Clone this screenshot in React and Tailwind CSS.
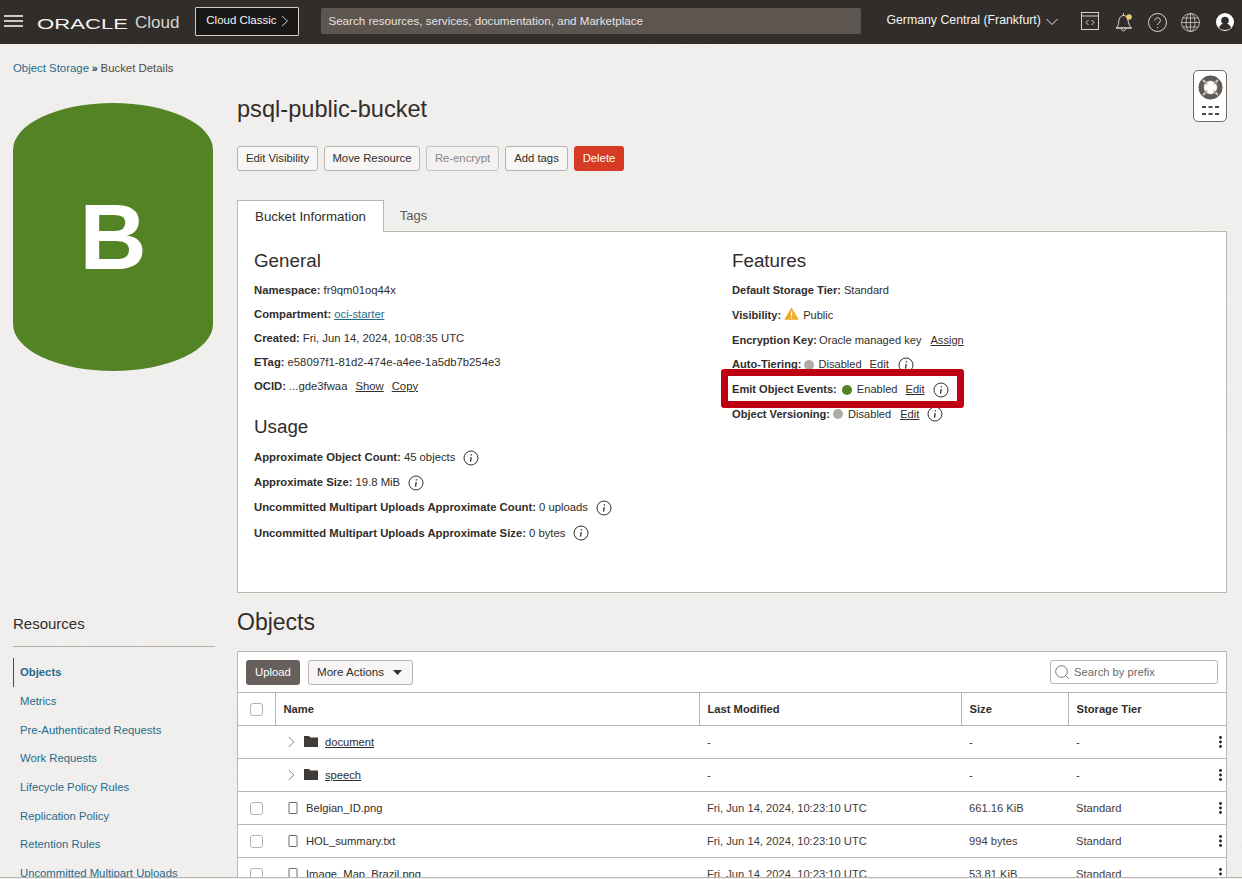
import React from 'react';

const resources = [
  'Metrics',
  'Pre-Authenticated Requests',
  'Work Requests',
  'Lifecycle Policy Rules',
  'Replication Policy',
  'Retention Rules',
  'Uncommitted Multipart Uploads',
];

const rows = [
  { folder: true, name: 'document', modified: '-', size: '-', tier: '-' },
  { folder: true, name: 'speech', modified: '-', size: '-', tier: '-' },
  { name: 'Belgian_ID.png', modified: 'Fri, Jun 14, 2024, 10:23:10 UTC', size: '661.16 KiB', tier: 'Standard' },
  { name: 'HOL_summary.txt', modified: 'Fri, Jun 14, 2024, 10:23:10 UTC', size: '994 bytes', tier: 'Standard' },
  { name: 'Image_Map_Brazil.png', modified: 'Fri, Jun 14, 2024, 10:23:10 UTC', size: '53.81 KiB', tier: 'Standard' },
];

// faint swirl pattern of the page background: [cx, cy, rings]
const swirls = [
  [120, 720, 14],
  [700, 90, 12],
  [1240, 330, 12],
  [110, 60, 8],
  [1160, 820, 10],
  [20, 420, 10],
];

function Swirls() {
  return (
    <svg width="1242" height="879" className="absolute inset-0" fill="none" stroke="#eeecea" strokeWidth="1">
      {swirls.map(([cx, cy, n]) =>
        Array.from({ length: n }, (_, i) => (
          <ellipse key={`${cx}-${i}`} cx={cx} cy={cy} rx={14 + i * 9} ry={11 + i * 8} transform={`rotate(${i * 3} ${cx} ${cy})`} />
        ))
      )}
    </svg>
  );
}

function InfoIcon({ className = '' }) {
  return (
    <svg width="16" height="16" viewBox="0 0 16 16" fill="none" className={className}>
      <circle cx="8" cy="8" r="7" stroke="#312d2a" strokeWidth="1" />
      <path d="M8.400 4.300v1.100M8.200 7.200 7.500 11.600" stroke="#312d2a" strokeWidth="1.300" />
    </svg>
  );
}

function Dot({ color }) {
  return <span className={`inline-block w-[10px] h-[10px] rounded-full ${color}`} />;
}

function Row({ label, h = 'h-[24px]', size = 'text-[11.3px]', children }) {
  return (
    <div className={`flex items-center ${h} ${size} whitespace-nowrap`}>
      <span className="font-bold">{label}</span>
      {children}
    </div>
  );
}

function FeatureRow({ label, children }) {
  return <Row label={label} h="h-[24.800px]" size="text-[11.100px]">{children}</Row>;
}

function Check() {
  return <span className="w-[13px] h-[13px] rounded-[3px] border border-[#b5b0ac] bg-white" />;
}

function Button({ className = '', children }) {
  return (
    <button className={`h-[25px] rounded-[3px] border text-[11.3px] ${className}`}>
      {children}
    </button>
  );
}

function TopBar() {
  return (
    <header className="h-[44px] bg-[#312d2a] flex items-center text-[#f5f4f2]">
      <svg width="20" height="14" viewBox="0 0 20 14" className="ml-[4px] mb-[2px]" stroke="#fff" strokeWidth="1.600">
        <path d="M0 2h19M0 7h19M0 12h19" />
      </svg>
      <div className="ml-[13px] mt-[2px] w-[91px] text-[15px] leading-none origin-left scale-x-[1.475] whitespace-nowrap">
        ORACLE
      </div>
      <span className="ml-[7px] mt-[2px] text-[17px] font-light text-[#d9d6d3]">Cloud</span>
      <button className="ml-[16px] mb-[2px] w-[104px] h-[29px] border border-[#d0cdca] rounded-[1px] bg-[#1a1816] flex items-center justify-center gap-[4px] text-[11.500px]">
        Cloud Classic
        <svg width="8" height="12" viewBox="0 0 8 12" fill="none" stroke="#d8d6d3" strokeWidth="0.900">
          <path d="M1 1l5.500 5L1 11" />
        </svg>
      </button>
      <div className="ml-[22px] mb-[2px] w-[540px] h-[26px] rounded-[2px] bg-[#5c5550] flex items-center pl-[7px] text-[11.600px] text-[#e6e3e0]">
        Search resources, services, documentation, and Marketplace
      </div>
      <div className="ml-[25px] mb-[3px] text-[12.300px]">Germany Central (Frankfurt)</div>
      <svg width="12" height="8" viewBox="0 0 12 8" fill="none" stroke="#e8e6e3" strokeWidth="1" className="ml-[5px]">
        <path d="M.5 1l5.500 5.500L11.500 1" />
      </svg>
      <svg width="18" height="18" viewBox="0 0 18 18" fill="none" stroke="#e8e6e3" strokeWidth="0.900" className="ml-[23px] mb-[2px]">
        <rect x="0.500" y="0.500" width="17" height="17" />
        <path d="M.5 4h17M7.500 8 5 10.500 7.500 13M10.500 8 13 10.500 10.500 13" />
      </svg>
      <svg width="18" height="20" viewBox="0 0 18 20" fill="none" stroke="#e8e6e3" strokeWidth="0.900" className="ml-[16px]">
        <path d="M1 16c2-1.500 2.500-3 2.800-7C4 6 6 3.500 8.500 3.500S12 5 12.800 7c.4 4 1.700 7.500 3.700 9zM1 16h15.500M6.500 17c.2 2.500 3.800 2.500 4 0M8.500 1v2.500" />
        <circle cx="14" cy="5" r="2.800" fill="#f0cc71" stroke="none" />
      </svg>
      <svg width="19" height="19" viewBox="0 0 19 19" fill="none" stroke="#e8e6e3" strokeWidth="0.900" className="ml-[15px]">
        <circle cx="9.500" cy="9.500" r="9" />
        <path d="M6.800 7.500c0-3.600 5.600-3.600 5.600 0 0 2.200-2.800 2.200-2.800 4.500M9.600 14v1.200" />
      </svg>
      <svg width="19" height="19" viewBox="0 0 19 19" fill="none" stroke="#cfccc9" strokeWidth="0.800" className="ml-[14px]">
        <circle cx="9.500" cy="9.500" r="9" />
        <ellipse cx="9.500" cy="9.500" rx="4.500" ry="9" />
        <path d="M9.500.5v18M.5 9.500h18M1.700 5h15.600M1.700 14h15.600" />
      </svg>
      <svg width="18" height="18" viewBox="0 0 18 18" className="ml-[16px]">
        <circle cx="9" cy="9" r="9" fill="#fff" />
        <circle cx="9" cy="7.500" r="3.800" fill="#312d2a" />
        <path d="M3 15c1-3.500 3.500-4.500 6-4.500s5 1 6 4.500c-3 2.500-9 2.500-12 0z" fill="#312d2a" />
      </svg>
    </header>
  );
}

function Sidebar() {
  return (
    <aside className="w-[237px] shrink-0 pl-[13px] pt-[23px]">
      <div className="w-[200px] h-[268px] rounded-[50%/17.500%] bg-[#548325] flex items-center justify-center text-white text-[93px] font-bold leading-none">
        B
      </div>
      <div className="mt-[241px] text-[15px] leading-[24px] text-[#312d2a]">Resources</div>
      <div className="mt-[10px] w-[202px] border-t border-[#b5b0ac]" />
      <nav className="mt-[11px] text-[11.300px] text-[#1f6c8c]">
        <div className="h-[29px] flex items-center pl-[6px] border-l border-[#1f5f7c] font-bold">Objects</div>
        {resources.map((r) => (
          <div key={r} className="h-[28.700px] flex items-center pl-[7px] whitespace-nowrap">{r}</div>
        ))}
      </nav>
    </aside>
  );
}

function BucketPanel() {
  return (
    <section className="h-[362px] -mt-px bg-white border border-[#bcb6b1] flex pl-[16px] pt-[16px]">
      <div className="w-[478px]">
        <h2 className="text-[18.800px] leading-[26px]">General</h2>
        <div className="mt-[4px]">
          <Row label="Namespace:"><span className="ml-[3px]">fr9qm01oq44x</span></Row>
          <Row label="Compartment:"><a className="ml-[3px] underline text-[#1f6c8c]">oci-starter</a></Row>
          <Row label="Created:"><span className="ml-[3px]">Fri, Jun 14, 2024, 10:08:35 UTC</span></Row>
          <Row label="ETag:"><span className="ml-[3px]">e58097f1-81d2-474e-a4ee-1a5db7b254e3</span></Row>
          <Row label="OCID:">
            <span className="ml-[3px]">...gde3fwaa</span>
            <a className="ml-[8px] underline">Show</a>
            <a className="ml-[8px] underline">Copy</a>
          </Row>
        </div>
        <h2 className="mt-[16px] text-[18.800px] leading-[26px]">Usage</h2>
        <div className="mt-[5px]">
          <Row label="Approximate Object Count:" h="h-[25px]">
            <span className="ml-[3px]">45 objects</span>
            <InfoIcon className="ml-[8px]" />
          </Row>
          <Row label="Approximate Size:" h="h-[25px]">
            <span className="ml-[3px]">19.8 MiB</span>
            <InfoIcon className="ml-[8px]" />
          </Row>
          <Row label="Uncommitted Multipart Uploads Approximate Count:" h="h-[25px]">
            <span className="ml-[3px]">0 uploads</span>
            <InfoIcon className="ml-[8px]" />
          </Row>
          <Row label="Uncommitted Multipart Uploads Approximate Size:" h="h-[26px]">
            <span className="ml-[3px]">0 bytes</span>
            <InfoIcon className="ml-[8px]" />
          </Row>
        </div>
      </div>
      <div>
        <h2 className="text-[18.800px] leading-[26px]">Features</h2>
        <div className="mt-[4px]">
          <FeatureRow label="Default Storage Tier:"><span className="ml-[3px]">Standard</span></FeatureRow>
          <FeatureRow label="Visibility:">
            <svg width="15" height="13" viewBox="0 0 15 13" className="ml-[3px] mb-[3px]">
              <path d="M7.500.5 14.800 12.800H.2z" fill="#f0a92c" />
              <path d="M7.500 4.500v4.500M7.500 10v1.400" stroke="#fff" strokeWidth="1.200" />
            </svg>
            <span className="ml-[4px]">Public</span>
          </FeatureRow>
          <FeatureRow label="Encryption Key:">
            <span className="ml-[2px]">Oracle managed key</span>
            <a className="ml-[9px] underline">Assign</a>
          </FeatureRow>
          <FeatureRow label="Auto-Tiering:">
            <span className="ml-[3px] flex"><Dot color="bg-[#b0aca8]" /></span>
            <span className="ml-[4px]">Disabled</span>
            <a className="ml-[8px] underline">Edit</a>
            <InfoIcon className="ml-[9px]" />
          </FeatureRow>
          <FeatureRow label="Emit Object Events:">
            <span className="ml-[5px] flex"><Dot color="bg-[#548325]" /></span>
            <span className="ml-[5px]">Enabled</span>
            <a className="ml-[8px] underline">Edit</a>
            <InfoIcon className="ml-[8px]" />
          </FeatureRow>
          <FeatureRow label="Object Versioning:">
            <span className="ml-[3px] flex"><Dot color="bg-[#b0aca8]" /></span>
            <span className="ml-[5px]">Disabled</span>
            <a className="ml-[9px] underline">Edit</a>
            <InfoIcon className="ml-[8px]" />
          </FeatureRow>
        </div>
      </div>
    </section>
  );
}

function ObjectsTable() {
  return (
    <section className="mt-[15px] bg-white border border-[#bcb6b1] rounded-t-[2px] border-b-0">
      <div className="h-[40px] flex items-center pl-[8px] pr-[8px]">
        <button className="w-[54px] h-[25px] rounded-[3px] bg-[#665f5b] text-white text-[11.300px]">Upload</button>
        <button className="ml-[8px] w-[105px] h-[25px] rounded-[3px] border border-[#b8b3ae] bg-[#f7f6f4] text-[11.600px] flex items-center pl-[8px]">
          More Actions
          <svg width="9" height="5" viewBox="0 0 9 5" className="ml-[9px]"><path d="M0 0h9L4.500 5z" fill="#312d2a" /></svg>
        </button>
        <div className="ml-auto w-[168px] h-[24px] rounded-[3px] border border-[#b8b3ae] flex items-center pl-[4px] text-[11.200px] text-[#6f6964]">
          <svg width="15" height="15" viewBox="0 0 15 15" fill="none" stroke="#6f6964" strokeWidth="0.900">
            <circle cx="6.500" cy="6.500" r="5.800" />
            <path d="M10.800 10.800 14 14" />
          </svg>
          <span className="ml-[4px]">Search by prefix</span>
        </div>
      </div>
      <table className="w-full table-fixed border-collapse text-[11.200px]">
        <colgroup>
          <col className="w-[37px]" />
          <col className="w-[424px]" />
          <col className="w-[262px]" />
          <col className="w-[107px]" />
          <col />
        </colgroup>
        <thead>
          <tr className="h-[33px] border-y border-[#bcb6b1] font-bold text-left">
            <th className="border-r border-[#bcb6b1]"><div className="flex justify-center"><Check /></div></th>
            <th className="pl-[8px] border-r border-[#bcb6b1]">Name</th>
            <th className="pl-[8px] border-r border-[#bcb6b1]">Last Modified</th>
            <th className="pl-[8px] border-r border-[#bcb6b1]">Size</th>
            <th className="pl-[8px]">Storage Tier</th>
          </tr>
        </thead>
        <tbody>
          {rows.map((r) => (
            <tr key={r.name} className="h-[33px] border-b border-[#bcb6b1]">
              <td><div className="flex justify-center">{!r.folder && <Check />}</div></td>
              <td className="pl-[13px]">
                {r.folder ? (
                  <div className="flex items-center">
                    <svg width="7" height="12" viewBox="0 0 7 12" fill="none" stroke="#7a746f" strokeWidth="0.900"><path d="M.8 1l5 5-5 5" /></svg>
                    <svg width="14" height="11" viewBox="0 0 14 11" className="ml-[9px]"><path d="M0 0h5l1.500 1.500H14V11H0z" fill="#3f3b38" /></svg>
                    <a className="ml-[7px] underline">{r.name}</a>
                  </div>
                ) : (
                  <div className="flex items-center">
                    <svg width="10" height="12" viewBox="0 0 10 12" fill="none" stroke="#6f6964" strokeWidth="1"><rect x="1" y=".5" width="8" height="11" rx=".5" /></svg>
                    <span className="ml-[8px]">{r.name}</span>
                  </div>
                )}
              </td>
              <td className="pl-[8px] text-[#3f3b38]">{r.modified}</td>
              <td className="pl-[8px] text-[#3f3b38]">{r.size}</td>
              <td className="pl-[8px] text-[#3f3b38]">
                <div className="flex items-center justify-between pr-[4px]">
                  <span>{r.tier}</span>
                  <svg width="3" height="12" viewBox="0 0 3 12" fill="#1f1c1a"><circle cx="1.500" cy="1.500" r="1.400" /><circle cx="1.500" cy="6" r="1.400" /><circle cx="1.500" cy="10.500" r="1.400" /></svg>
                </div>
              </td>
            </tr>
          ))}
        </tbody>
      </table>
    </section>
  );
}

export default function App() {
  return (
    <div className="relative h-[879px] overflow-hidden bg-[#f1efed] text-[#312d2a] font-['Liberation_Sans',Arial,sans-serif]">
      <Swirls />
      <div className="relative">
        <TopBar />
        <div className="h-[23px] mt-[13px] pl-[13px] flex items-center text-[11.400px]">
          <a className="text-[#1f6c8c]">Object Storage</a>
          <span className="mx-[3px] text-[10px] font-bold">»</span>
          <span className="text-[#4f4a46]">Bucket Details</span>
        </div>
        <div className="flex">
          <Sidebar />
          <main className="w-[990px] pt-[15px]">
            <h1 className="h-[28px] text-[23.600px] leading-[28px]">psql-public-bucket</h1>
            <div className="mt-[23px] flex gap-[6px]">
              <Button className="w-[81px] border-[#b8b3ae] bg-[#f7f6f4]">Edit Visibility</Button>
              <Button className="w-[96px] border-[#b8b3ae] bg-[#f7f6f4]">Move Resource</Button>
              <Button className="w-[73px] border-[#c6c2be] bg-[#f3f1ef] text-[#8a857f]">Re-encrypt</Button>
              <Button className="w-[63px] border-[#b8b3ae] bg-[#f7f6f4]">Add tags</Button>
              <button className="w-[50px] h-[25px] rounded-[3px] bg-[#d63b25] text-white text-[11.300px]">Delete</button>
            </div>
            <div className="mt-[29px] flex h-[32px] relative z-10">
              <div className="w-[147px] h-[32px] bg-white border border-[#bcb6b1] border-b-0 flex items-center justify-center text-[13.300px]">
                Bucket Information
              </div>
              <div className="w-[59px] flex items-center justify-center text-[13px] text-[#5f5954]">Tags</div>
            </div>
            <BucketPanel />
            <h2 className="mt-[15px] h-[28px] text-[23px] leading-[28px]">Objects</h2>
            <ObjectsTable />
          </main>
        </div>
      </div>

      {/* help widget */}
      <div className="absolute left-[1193px] top-[70px] w-[34px] h-[52px] rounded-[5px] bg-white border border-[#6f6964] flex flex-col items-center pt-[4px]">
        <svg width="25" height="25" viewBox="0 0 25 25" fill="none">
          <circle cx="12.500" cy="12.500" r="9.500" stroke="#5f5a56" strokeWidth="4.500" />
          <path d="M5 5l4.500 4.500M20 5l-4.500 4.500M5 20l4.500-4.500M20 20l-4.500-4.500" stroke="#c9c6c3" strokeWidth="2" />
          <circle cx="12.500" cy="12.500" r="11.500" stroke="#5f5a56" strokeWidth="1" />
          <circle cx="12.500" cy="12.500" r="7" stroke="#5f5a56" strokeWidth="1" />
        </svg>
        <svg width="17" height="9" viewBox="0 0 17 9" className="mt-[6px]" fill="#4f4a46">
          <path d="M0 0h4v2H0zM6.500 0h4v2h-4zM13 0h4v2h-4zM0 7h4v2H0zM6.500 7h4v2h-4zM13 7h4v2h-4z" />
        </svg>
      </div>

      {/* red annotation around Emit Object Events */}
      <div className="absolute left-[721px] top-[369px] w-[243px] h-[39px] border-[7px] border-[#bf0012] rounded-[3px]" />

      <div className="absolute left-0 right-0 bottom-[1px] h-[1px] bg-[#bcb6b1]" />
      <div className="absolute left-0 right-0 bottom-0 h-[1px] bg-[#f1efed]" />
    </div>
  );
}
